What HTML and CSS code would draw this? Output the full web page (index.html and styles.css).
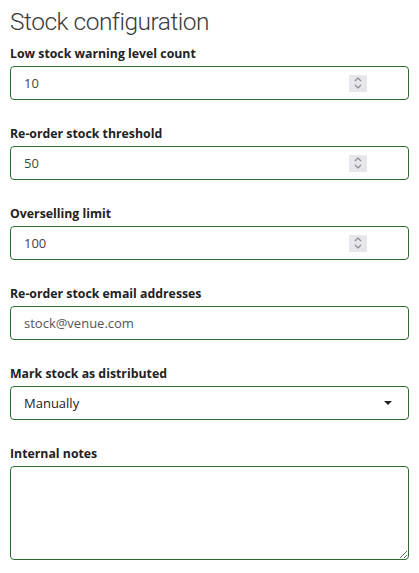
FILE: index.html
```html
<!DOCTYPE html>
<html>
<head>
<meta charset="utf-8">
<link rel="stylesheet" href="styles.css">
</head>
<body>
<div class="page">
  <h1 class="title">Stock configuration</h1>
  <div class="field">
    <label class="label">Low stock warning level count</label>
    <div class="box">
      <input class="control" type="text" value="10">
      <span class="spin"><svg width="10" height="14" viewBox="0 0 10 14"><path d="M2 5 L5 2 L8 5 M2 9 L5 12 L8 9" fill="none" stroke="#8a8a93" stroke-width="1.2"/></svg></span>
    </div>
  </div>
  <div class="field">
    <label class="label">Re-order stock threshold</label>
    <div class="box">
      <input class="control" type="text" value="50">
      <span class="spin"><svg width="10" height="14" viewBox="0 0 10 14"><path d="M2 5 L5 2 L8 5 M2 9 L5 12 L8 9" fill="none" stroke="#8a8a93" stroke-width="1.2"/></svg></span>
    </div>
  </div>
  <div class="field">
    <label class="label">Overselling limit</label>
    <div class="box">
      <input class="control" type="text" value="100">
      <span class="spin"><svg width="10" height="14" viewBox="0 0 10 14"><path d="M2 5 L5 2 L8 5 M2 9 L5 12 L8 9" fill="none" stroke="#8a8a93" stroke-width="1.2"/></svg></span>
    </div>
  </div>
  <div class="field">
    <label class="label">Re-order stock email addresses</label>
    <div class="box">
      <input class="control muted" type="text" value="stock@venue.com">
    </div>
  </div>
  <div class="field">
    <label class="label">Mark stock as distributed</label>
    <div class="box select-box">
      <span class="select-value">Manually</span>
      <span class="caret"></span>
    </div>
  </div>
  <div class="field">
    <label class="label">Internal notes</label>
    <textarea class="notes"></textarea>
  </div>
</div>
</body>
</html>
```
FILE: styles.css
```css
html, body {
  margin: 0;
  padding: 0;
  background: #fff;
}
.page {
  padding: 0 10px;
  font-family: "Open Sans", "Noto Sans", sans-serif;
}
.title {
  margin: 0;
  padding-top: 6px;
  font-family: Roboto, "Open Sans", sans-serif;
  font-size: 24.5px;
  font-weight: 300;
  letter-spacing: -0.5px;
  color: #3a3a3a;
  line-height: 32px;
  margin-bottom: 8px;
}
.field {
  display: flex;
  flex-direction: column;
  margin-bottom: 26px;
}
.label {
  font-size: 12.3px;
  font-weight: 700;
  color: #222;
  line-height: 16px;
  margin-bottom: 4px;
}
.box {
  display: flex;
  align-items: center;
  height: 34px;
  box-sizing: border-box;
  border: 1px solid #2d6a30;
  border-radius: 4px;
  padding: 0 12px 0 13px;
}
.control {
  flex: 1;
  border: none;
  outline: none;
  padding: 0;
  font-family: inherit;
  font-size: 13px;
  color: #444;
  background: transparent;
  min-width: 0;
}
.control.muted {
  color: #555;
}
.spin {
  width: 18px;
  height: 17px;
  background: #e6e6eb;
  display: flex;
  align-items: center;
  justify-content: center;
  margin-right: 29px;
}
.select-box {
  justify-content: space-between;
  padding-right: 16px;
}
.select-value {
  font-size: 13px;
  color: #222;
}
.caret {
  width: 0;
  height: 0;
  border-left: 4px solid transparent;
  border-right: 4px solid transparent;
  border-top: 4px solid #222;
}
.notes {
  display: block;
  height: 94px;
  box-sizing: border-box;
  border: 1px solid #2d6a30;
  border-radius: 4px;
  outline: none;
  resize: vertical;
  font-family: inherit;
}
```
